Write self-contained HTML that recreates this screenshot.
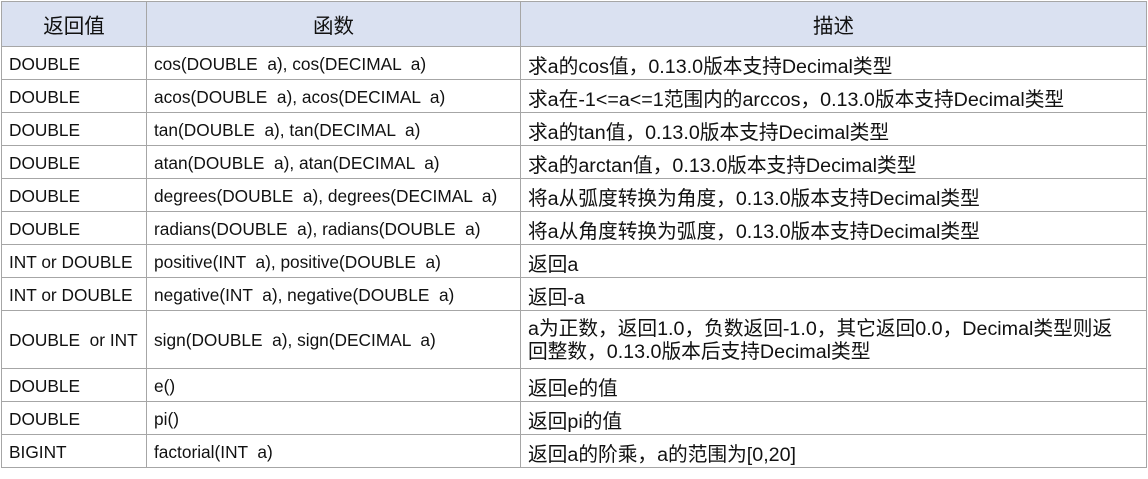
<!DOCTYPE html>
<html><head><meta charset="utf-8"><style>
body{margin:0;background:#fff;width:1148px;height:479px;overflow:hidden}
table{border-collapse:collapse;position:absolute;left:1px;top:1px;font-family:"Liberation Sans","Noto Sans CJK SC",sans-serif;font-size:17.3px;color:#111}
td,th{border:1.5px solid #a6a6a6;padding:2px 0 0 7px;height:30px;text-align:left;white-space:pre;vertical-align:middle}
td:nth-child(3){font-size:19.7px;letter-spacing:0}
th{background:#dae1f1;font-weight:normal;text-align:center;font-size:20.5px;height:44px;padding:0}
tr.t td{height:55px;line-height:23px}
</style></head><body>
<table>
<colgroup><col style="width:145px"><col style="width:374px"><col style="width:626px"></colgroup>
<tr><th>返回值</th><th>函数</th><th>描述</th></tr>
<tr><td>DOUBLE</td><td>cos(DOUBLE  a), cos(DECIMAL  a)</td><td>求a的cos值，0.13.0版本支持Decimal类型</td></tr>
<tr><td>DOUBLE</td><td>acos(DOUBLE  a), acos(DECIMAL  a)</td><td>求a在-1&lt;=a&lt;=1范围内的arccos，0.13.0版本支持Decimal类型</td></tr>
<tr><td>DOUBLE</td><td>tan(DOUBLE  a), tan(DECIMAL  a)</td><td>求a的tan值，0.13.0版本支持Decimal类型</td></tr>
<tr><td>DOUBLE</td><td>atan(DOUBLE  a), atan(DECIMAL  a)</td><td>求a的arctan值，0.13.0版本支持Decimal类型</td></tr>
<tr><td>DOUBLE</td><td>degrees(DOUBLE  a), degrees(DECIMAL  a)</td><td>将a从弧度转换为角度，0.13.0版本支持Decimal类型</td></tr>
<tr><td>DOUBLE</td><td>radians(DOUBLE  a), radians(DOUBLE  a)</td><td>将a从角度转换为弧度，0.13.0版本支持Decimal类型</td></tr>
<tr><td>INT or DOUBLE</td><td>positive(INT  a), positive(DOUBLE  a)</td><td>返回a</td></tr>
<tr><td>INT or DOUBLE</td><td>negative(INT  a), negative(DOUBLE  a)</td><td>返回-a</td></tr>
<tr class="t"><td>DOUBLE  or INT</td><td>sign(DOUBLE  a), sign(DECIMAL  a)</td><td>a为正数，返回1.0，负数返回-1.0，其它返回0.0，Decimal类型则返<br>回整数，0.13.0版本后支持Decimal类型</td></tr>
<tr><td>DOUBLE</td><td>e()</td><td>返回e的值</td></tr>
<tr><td>DOUBLE</td><td>pi()</td><td>返回pi的值</td></tr>
<tr><td>BIGINT</td><td>factorial(INT  a)</td><td>返回a的阶乘，a的范围为[0,20]</td></tr>
</table>
</body></html>
